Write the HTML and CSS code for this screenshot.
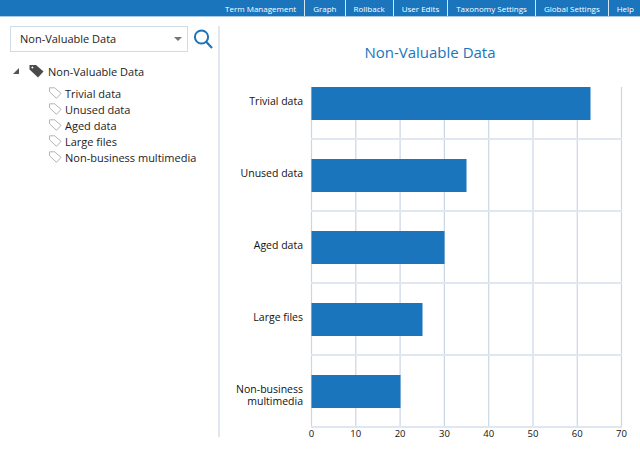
FILE: index.html
```html
<!DOCTYPE html>
<html lang="en">

<head>
    <meta charset="UTF-8">
    <title>Non-Valuable Data</title>
    <link rel="stylesheet" href="styles.css">
</head>

<body>
    <div class="topnav">
        <a class="nav-item">Term Management</a>
        <a class="nav-item">Graph</a>
        <a class="nav-item">Rollback</a>
        <a class="nav-item">User Edits</a>
        <a class="nav-item">Taxonomy Settings</a>
        <a class="nav-item">Global Settings</a>
        <a class="nav-item">Help</a>
    </div>

    <div class="main">
        <div class="sidebar">
            <div class="search-row">
                <div class="select">
                    <span>Non-Valuable Data</span>
                    <span class="select-arrow"></span>
                </div>
                <svg class="search-icon" width="20" height="22" viewBox="0 0 20 22">
                    <circle cx="8.5" cy="9" r="6.6" fill="none" stroke="#1a75bc" stroke-width="2"></circle>
                    <path d="M13.2 13.8 L19 20" fill="none" stroke="#1a75bc" stroke-width="2.2"></path>
                </svg>
            </div>

            <div class="tree-root">
                <span class="tree-toggle"></span>
                <svg class="tag-solid" width="16" height="14" viewBox="0 0 16 14">
                    <path d="M0.5 1 H7 L14.5 7.5 L9 13.5 L0.5 5.5 Z" fill="#4a4a4a"></path>
                    <circle cx="3.4" cy="3.6" r="1" fill="#fff"></circle>
                </svg>
                <span>Non-Valuable Data</span>
            </div>
            <ul class="tree-list">
                <li class="tree-item"><svg class="tag" width="13" height="12" viewBox="0 0 13 12"><path d="M0.5 0.8 H5.5 L12 6.3 L7.5 11.3 L0.5 4.8 Z" fill="#fff" stroke="#b4b4b4"></path></svg>Trivial data</li>
                <li class="tree-item"><svg class="tag" width="13" height="12" viewBox="0 0 13 12"><path d="M0.5 0.8 H5.5 L12 6.3 L7.5 11.3 L0.5 4.8 Z" fill="#fff" stroke="#b4b4b4"></path></svg>Unused data</li>
                <li class="tree-item"><svg class="tag" width="13" height="12" viewBox="0 0 13 12"><path d="M0.5 0.8 H5.5 L12 6.3 L7.5 11.3 L0.5 4.8 Z" fill="#fff" stroke="#b4b4b4"></path></svg>Aged data</li>
                <li class="tree-item"><svg class="tag" width="13" height="12" viewBox="0 0 13 12"><path d="M0.5 0.8 H5.5 L12 6.3 L7.5 11.3 L0.5 4.8 Z" fill="#fff" stroke="#b4b4b4"></path></svg>Large files</li>
                <li class="tree-item"><svg class="tag" width="13" height="12" viewBox="0 0 13 12"><path d="M0.5 0.8 H5.5 L12 6.3 L7.5 11.3 L0.5 4.8 Z" fill="#fff" stroke="#b4b4b4"></path></svg>Non-business multimedia</li>
            </ul>
        </div>

        <div class="chart-panel">
            <h2 class="chart-title">Non-Valuable Data</h2>
            <svg class="chart" width="420" height="380" viewBox="220 70 420 380">
                <g stroke="#c9d6e4" stroke-width="1.2">
                    <line x1="311.5" y1="87" x2="311.5" y2="427"></line>
                    <line x1="355.8" y1="87" x2="355.8" y2="427"></line>
                    <line x1="400.1" y1="87" x2="400.1" y2="427"></line>
                    <line x1="444.4" y1="87" x2="444.4" y2="427"></line>
                    <line x1="488.7" y1="87" x2="488.7" y2="427"></line>
                    <line x1="533" y1="87" x2="533" y2="427"></line>
                    <line x1="577.3" y1="87" x2="577.3" y2="427"></line>
                    <line x1="621.5" y1="87" x2="621.5" y2="427"></line>
                </g>
                <g stroke="#e1e7f0" stroke-width="2">
                    <line x1="311" y1="139" x2="622" y2="139"></line>
                    <line x1="311" y1="211" x2="622" y2="211"></line>
                    <line x1="311" y1="283" x2="622" y2="283"></line>
                    <line x1="311" y1="355" x2="622" y2="355"></line>
                    <line x1="311" y1="427" x2="622" y2="427"></line>
                </g>
                <g fill="#1a75bc">
                    <rect x="311.5" y="87" width="279" height="33"></rect>
                    <rect x="311.5" y="159" width="155" height="33"></rect>
                    <rect x="311.5" y="231" width="133" height="33"></rect>
                    <rect x="311.5" y="303" width="111" height="33"></rect>
                    <rect x="311.5" y="375" width="89" height="33"></rect>
                </g>
                <g class="cat-labels" text-anchor="end">
                    <text x="303" y="105">Trivial data</text>
                    <text x="303" y="177">Unused data</text>
                    <text x="303" y="249">Aged data</text>
                    <text x="303" y="321">Large files</text>
                    <text x="303" y="393"><tspan x="303">Non-business</tspan><tspan x="303" dy="12">multimedia</tspan></text>
                </g>
                <g class="val-labels" text-anchor="middle">
                    <text x="311.5" y="437">0</text>
                    <text x="355.8" y="437">10</text>
                    <text x="400.1" y="437">20</text>
                    <text x="444.4" y="437">30</text>
                    <text x="488.7" y="437">40</text>
                    <text x="533" y="437">50</text>
                    <text x="577.3" y="437">60</text>
                    <text x="621.5" y="437">70</text>
                </g>
            </svg>
        </div>
    </div>
</body>

</html>
```

FILE: styles.css
```css
/* Global styles */
body {
    margin: 0;
    width: 640px;
    height: 450px;
    overflow: hidden;
    background-color: #fff;
    font-family: "Open Sans", Arial, sans-serif;
    color: #1c1c1c;
}

/* Top bar */
.topnav {
    display: flex;
    justify-content: flex-end;
    height: 16px;
    background-color: #1a75bc;
    border-bottom: 1px solid #a9cbe6;
}

.nav-item {
    display: block;
    padding: 0 8px;
    font-size: 8px;
    line-height: 17px;
    color: #fff;
    border-left: 1px solid #d5e6f3;
}

.nav-item:first-child {
    border-left: none;
}

.nav-item:last-child {
    padding-right: 6px;
}

/* Main layout */
.main {
    display: flex;
    height: 411px;
    margin-top: 9px;
}

.sidebar {
    width: 218px;
    flex-shrink: 0;
    border-right: 2px solid #e1e7f0;
}

.search-row {
    display: flex;
    align-items: center;
    margin-left: 10px;
    gap: 5px;
}

.select {
    display: flex;
    align-items: center;
    justify-content: space-between;
    box-sizing: border-box;
    width: 178px;
    height: 26px;
    padding: 0 5px 0 9px;
    border: 1px solid #cfdce8;
    font-size: 11px;
    line-height: 22px;
}

.select-arrow {
    width: 0;
    height: 0;
    border-left: 4px solid transparent;
    border-right: 4px solid transparent;
    border-top: 4px solid #777;
}

.search-icon {
    display: block;
}

/* Tree */
.tree-root {
    display: flex;
    align-items: center;
    margin: 11px 0 0 13px;
    height: 16px;
    font-size: 11px;
}

.tree-toggle {
    width: 0;
    height: 0;
    margin-right: 10px;
    border-left: 6px solid transparent;
    border-bottom: 6px solid #555;
}

.tag-solid {
    margin-right: 3px;
}

.tree-list {
    list-style: none;
    margin: 6.5px 0 0;
    padding: 0 0 0 49px;
}

.tree-item {
    display: flex;
    align-items: center;
    height: 16px;
    font-size: 11px;
}

.tag {
    margin-right: 3px;
    margin-top: -2px;
}

/* Chart */
.chart-panel {
    flex: 1;
    min-width: 0;
}

.chart-title {
    margin: 16px 0 0;
    font-size: 15px;
    font-weight: 500;
    line-height: 20px;
    text-align: center;
    color: #1a75bc;
}

.chart {
    display: block;
    margin-top: 8px;
}

.cat-labels text {
    font-size: 10.5px;
    fill: #111;
}

.val-labels text {
    font-size: 9.5px;
    fill: #111;
}
```
